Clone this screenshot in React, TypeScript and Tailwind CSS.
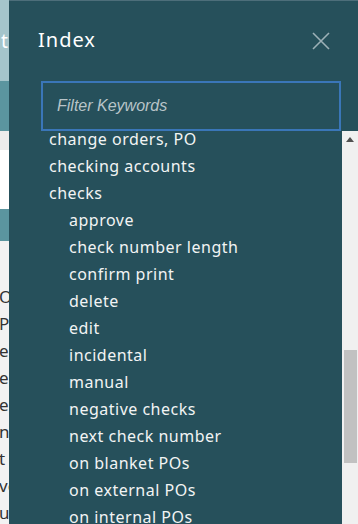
import React from "react";

const items: { t: string; l: number }[] = [
  { t: "change orders, PO", l: 1 },
  { t: "checking accounts", l: 1 },
  { t: "checks", l: 1 },
  { t: "approve", l: 2 },
  { t: "check number length", l: 2 },
  { t: "confirm print", l: 2 },
  { t: "delete", l: 2 },
  { t: "edit", l: 2 },
  { t: "incidental", l: 2 },
  { t: "manual", l: 2 },
  { t: "negative checks", l: 2 },
  { t: "next check number", l: 2 },
  { t: "on blanket POs", l: 2 },
  { t: "on external POs", l: 2 },
  { t: "on internal POs", l: 2 },
  { t: "on positive pay", l: 2 },
];

const bgLines = ["Ov", "Pr", "e", "er", "e", "ne", "t", "ve", "ut"];

export default function App() {
  return (
    <div
      className="w-[358px] h-[524px] flex overflow-hidden"
      style={{ fontFamily: '"Noto Sans", "Open Sans", sans-serif' }}
    >
      {/* background page strip */}
      <div className="w-[9px] shrink-0 flex flex-col overflow-hidden">
        <div className="h-[81px] bg-[#a5c5cb] flex items-center overflow-hidden">
          <span className="text-white text-[19px] leading-none ml-[1px] pt-[2px]">t</span>
        </div>
        <div className="h-[50px] bg-[#5b959f]" />
        <div className="h-[19px] bg-[#ececec]" />
        <div className="h-[59px] bg-white" />
        <div className="h-[32px] bg-[#5b959f]" />
        <div className="flex-1 bg-[#f2f2f2] pt-[42px] overflow-hidden">
          {bgLines.map((w, i) => (
            <div
              key={i}
              className="h-[27px] leading-[27px] text-[17px] text-[#333] whitespace-nowrap -ml-[1px]"
            >
              {w}
            </div>
          ))}
        </div>
      </div>

      {/* Index panel */}
      <div className="flex-1 bg-[#26505b] flex flex-col border-t border-[#4d6e7a]">
        <div className="h-[80px] shrink-0 flex items-center justify-between pl-[29px] pr-[28px] pb-[2px]">
          <span className="text-white text-[20px] leading-none tracking-[1px]">Index</span>
          <svg width="18" height="18" viewBox="0 0 18 18" className="mt-[1px]">
            <path d="M1 1 L17 17 M17 1 L1 17" stroke="#9cb0b7" strokeWidth="1.6" />
          </svg>
        </div>
        <div className="shrink-0 pl-[32px] pr-[17px]">
          <div className="h-[50px] border-2 border-[#3a76b8] flex items-center pl-[14px]">
            <span
              className="italic text-[16px] text-[#b8c4c8]"
              style={{ fontFamily: '"Liberation Sans", Arial, sans-serif' }}
            >
              Filter Keywords
            </span>
          </div>
        </div>
        <div className="flex-1 flex overflow-hidden">
          <div className="flex-1 overflow-hidden">
            <div className="-mt-[5px]">
              {items.map((it, i) => (
                <div
                  key={i}
                  className={`h-[27px] leading-[27px] text-[16px] tracking-[0.5px] text-[#f2f4f4] whitespace-nowrap ${
                    it.l === 1 ? "pl-[40px]" : "pl-[60px]"
                  }`}
                >
                  {it.t}
                </div>
              ))}
            </div>
          </div>
          <div className="w-[16px] shrink-0 bg-[#f0f0f0] flex flex-col">
            <div className="h-[17px] flex items-center justify-center">
              <svg width="8" height="5" viewBox="0 0 8 5">
                <path d="M0 5 L4 0 L8 5 Z" fill="#505050" />
              </svg>
            </div>
            <div className="h-[202px]" />
            <div className="h-[113px] bg-[#c1c1c1] ml-[2px] mr-[1px]" />
          </div>
        </div>
      </div>
    </div>
  );
}
